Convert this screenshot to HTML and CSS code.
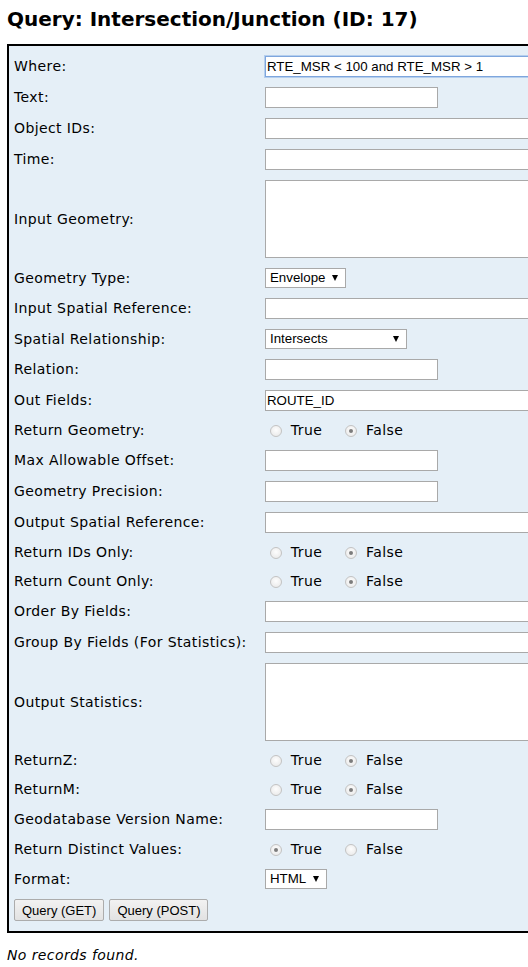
FILE: index.html
```html
<!DOCTYPE html>
<html>
<head>
<meta charset="utf-8">
<title>Query: Intersection/Junction (ID: 17)</title>
<link rel="stylesheet" href="styles.css">
</head>
<body>
<h2 class="title">Query: Intersection/Junction (ID: 17)</h2>
<form class="query-form">
  <div class="grid">
    <label class="lbl">Where:</label>
    <div class="ctl"><input class="txt long focused" type="text" value="RTE_MSR &lt; 100 and RTE_MSR &gt; 1"></div>

    <label class="lbl">Text:</label>
    <div class="ctl"><input class="txt short" type="text"></div>

    <label class="lbl">Object IDs:</label>
    <div class="ctl"><input class="txt long" type="text"></div>

    <label class="lbl">Time:</label>
    <div class="ctl"><input class="txt long" type="text"></div>

    <label class="lbl">Input Geometry:</label>
    <div class="ctl"><textarea class="area"></textarea></div>

    <label class="lbl">Geometry Type:</label>
    <div class="ctl"><span class="sel sel-env">Envelope</span></div>

    <label class="lbl">Input Spatial Reference:</label>
    <div class="ctl"><input class="txt long" type="text"></div>

    <label class="lbl">Spatial Relationship:</label>
    <div class="ctl"><span class="sel sel-rel">Intersects</span></div>

    <label class="lbl">Relation:</label>
    <div class="ctl"><input class="txt short" type="text"></div>

    <label class="lbl">Out Fields:</label>
    <div class="ctl"><input class="txt long" type="text" value="ROUTE_ID"></div>

    <label class="lbl">Return Geometry:</label>
    <div class="ctl radios">
      <label class="opt"><input type="radio" name="rg" class="rad"> True</label>
      <label class="opt"><input type="radio" name="rg" class="rad" checked> False</label>
    </div>

    <label class="lbl">Max Allowable Offset:</label>
    <div class="ctl"><input class="txt short" type="text"></div>

    <label class="lbl">Geometry Precision:</label>
    <div class="ctl"><input class="txt short" type="text"></div>

    <label class="lbl">Output Spatial Reference:</label>
    <div class="ctl"><input class="txt long" type="text"></div>

    <label class="lbl">Return IDs Only:</label>
    <div class="ctl radios">
      <label class="opt"><input type="radio" name="ri" class="rad"> True</label>
      <label class="opt"><input type="radio" name="ri" class="rad" checked> False</label>
    </div>

    <label class="lbl">Return Count Only:</label>
    <div class="ctl radios">
      <label class="opt"><input type="radio" name="rc" class="rad"> True</label>
      <label class="opt"><input type="radio" name="rc" class="rad" checked> False</label>
    </div>

    <label class="lbl">Order By Fields:</label>
    <div class="ctl"><input class="txt long" type="text"></div>

    <label class="lbl">Group By Fields (For Statistics):</label>
    <div class="ctl"><input class="txt long" type="text"></div>

    <label class="lbl">Output Statistics:</label>
    <div class="ctl"><textarea class="area"></textarea></div>

    <label class="lbl">ReturnZ:</label>
    <div class="ctl radios">
      <label class="opt"><input type="radio" name="rz" class="rad"> True</label>
      <label class="opt"><input type="radio" name="rz" class="rad" checked> False</label>
    </div>

    <label class="lbl">ReturnM:</label>
    <div class="ctl radios">
      <label class="opt"><input type="radio" name="rm" class="rad"> True</label>
      <label class="opt"><input type="radio" name="rm" class="rad" checked> False</label>
    </div>

    <label class="lbl">Geodatabase Version Name:</label>
    <div class="ctl"><input class="txt short" type="text"></div>

    <label class="lbl">Return Distinct Values:</label>
    <div class="ctl radios">
      <label class="opt"><input type="radio" name="rd" class="rad" checked> True</label>
      <label class="opt"><input type="radio" name="rd" class="rad"> False</label>
    </div>

    <label class="lbl">Format:</label>
    <div class="ctl"><span class="sel sel-fmt">HTML</span></div>
  </div>
  <div class="buttons">
    <button type="button" class="btn">Query (GET)</button>
    <button type="button" class="btn">Query (POST)</button>
  </div>
</form>
<p class="result">No records found.</p>
</body>
</html>
```

FILE: styles.css
```css
html {
  overflow: hidden;
}

body {
  margin: 0;
  padding: 0 0 0 7px;
  background: #fff;
  color: #000;
  font-family: "DejaVu Sans", Verdana, sans-serif;
  font-size: 14px;
  letter-spacing: 0.4px;
}

.title {
  margin: 0;
  padding-top: 7px;
  height: 44px;
  box-sizing: border-box;
  font-size: 20px;
  font-weight: bold;
  line-height: 24px;
  letter-spacing: 0;
  white-space: nowrap;
}

.query-form {
  width: 640px;
  border: 2px solid #000;
  background: #e5eff7;
  padding: 10px 0 10px 5px;
  box-sizing: border-box;
}

.grid {
  display: grid;
  grid-template-columns: 251px 1fr;
  row-gap: 10px;
  align-items: center;
}

.lbl {
  line-height: 17px;
  white-space: nowrap;
}

.ctl {
  display: flex;
  align-items: center;
}

.txt {
  box-sizing: border-box;
  height: 21px;
  margin: 0;
  padding: 1px 1px;
  border: 1px solid #a9a9a9;
  background: #fff;
  font-family: "Liberation Sans", Arial, sans-serif;
  font-size: 13.3px;
  letter-spacing: 0;
  color: #000;
  outline: none;
}

.long {
  width: 360px;
}

.short {
  width: 173px;
}

.focused {
  border-color: #7ea6dd;
  box-shadow: 0 0 0 1px #b5cfee;
}

.area {
  box-sizing: border-box;
  width: 360px;
  height: 78px;
  margin: 0;
  border: 1px solid #a9a9a9;
  background: #fff;
  resize: none;
  display: block;
}

.sel {
  position: relative;
  box-sizing: border-box;
  display: inline-block;
  height: 20px;
  padding: 0 0 0 4px;
  border: 1px solid #a9a9a9;
  background: #fff;
  font-family: "Liberation Sans", Arial, sans-serif;
  font-size: 13.3px;
  letter-spacing: 0;
  line-height: 18px;
  color: #000;
}

.sel::after {
  content: "";
  position: absolute;
  right: 7px;
  top: 6px;
  border-left: 3.5px solid transparent;
  border-right: 3.5px solid transparent;
  border-top: 6px solid #000;
}

.sel-env {
  width: 81px;
}

.sel-rel {
  width: 142px;
}

.sel-fmt {
  width: 62px;
}

.radios {
  height: 19px;
}

.opt {
  display: inline-flex;
  align-items: center;
  margin-right: 18px;
  white-space: pre;
  line-height: 17px;
}

.rad {
  -webkit-appearance: none;
  appearance: none;
  box-sizing: border-box;
  width: 12px;
  height: 12px;
  margin: 0 4px 0 5px;
  border: 1px solid #c3c3c3;
  border-radius: 50%;
  background: radial-gradient(circle at 50% 40%, #fdfdfd 0%, #e6e6e6 100%);
  position: relative;
}

.rad:checked::after {
  content: "";
  position: absolute;
  left: 3px;
  top: 3px;
  width: 4px;
  height: 4px;
  border-radius: 50%;
  background: #7c7c7c;
}

.buttons {
  display: flex;
  gap: 5px;
  margin-top: 10px;
}

.btn {
  box-sizing: border-box;
  height: 22px;
  margin: 0;
  padding: 0 7px;
  border: 1px solid #acacac;
  border-radius: 2px;
  background: linear-gradient(#f2f2f2, #e2e2e2);
  font-family: "Liberation Sans", Arial, sans-serif;
  font-size: 13px;
  letter-spacing: 0;
  color: #000;
}

.result {
  margin: 14px 0 0;
  font-style: italic;
  line-height: 17px;
}
```
